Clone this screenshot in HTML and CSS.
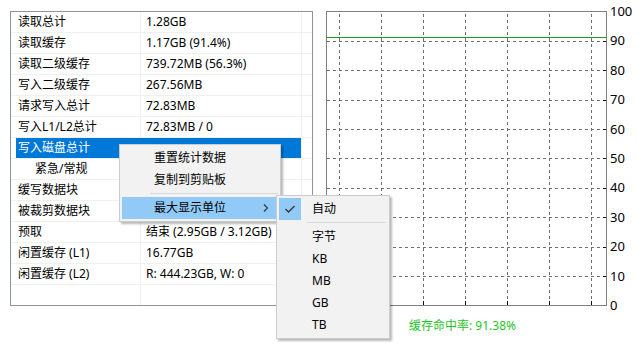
FILE: index.html
```html
<!DOCTYPE html>
<html>
<head>
<meta charset="utf-8">
<link rel="stylesheet" href="styles.css">
</head>
<body>
<div class="app">
  <div class="stats">
    <div class="row"><div class="k">读取总计</div><div class="v">1.28GB</div><div class="e"></div></div>
    <div class="row"><div class="k">读取缓存</div><div class="v">1.17GB (91.4%)</div><div class="e"></div></div>
    <div class="row"><div class="k">读取二级缓存</div><div class="v">739.72MB (56.3%)</div><div class="e"></div></div>
    <div class="row"><div class="k">写入二级缓存</div><div class="v">267.56MB</div><div class="e"></div></div>
    <div class="row"><div class="k">请求写入总计</div><div class="v">72.83MB</div><div class="e"></div></div>
    <div class="row"><div class="k">写入L1/L2总计</div><div class="v">72.83MB / 0</div><div class="e"></div></div>
    <div class="row sel"><div class="k">写入磁盘总计</div><div class="v"></div><div class="e"></div></div>
    <div class="row"><div class="k sub-k">紧急/常规</div><div class="v"></div><div class="e"></div></div>
    <div class="row"><div class="k">缓写数据块</div><div class="v"></div><div class="e"></div></div>
    <div class="row"><div class="k">被裁剪数据块</div><div class="v"></div><div class="e"></div></div>
    <div class="row"><div class="k">预取</div><div class="v">结束 (2.95GB / 3.12GB)</div><div class="e"></div></div>
    <div class="row"><div class="k">闲置缓存 (L1)</div><div class="v">16.77GB</div><div class="e"></div></div>
    <div class="row"><div class="k">闲置缓存 (L2)</div><div class="v">R: 444.23GB, W: 0</div><div class="e"></div></div>
    <div class="row"><div class="k"></div><div class="v"></div><div class="e"></div></div>
  </div>

  <div class="chart-area">
    <div class="chart-row">
      <svg class="chart" width="281" height="295" viewBox="0 0 281 295">
        <rect x="0" y="0" width="281" height="295" fill="#fff"/>
        <g stroke="#6e6e6e" stroke-width="1" stroke-dasharray="3 3" fill="none">
          <line x1="13.5" y1="3" x2="13.5" y2="294"/>
          <line x1="55.5" y1="3" x2="55.5" y2="294"/>
          <line x1="97.5" y1="3" x2="97.5" y2="294"/>
          <line x1="139.5" y1="3" x2="139.5" y2="294"/>
          <line x1="181.5" y1="3" x2="181.5" y2="294"/>
          <line x1="223.5" y1="3" x2="223.5" y2="294"/>
          <line x1="265.5" y1="3" x2="265.5" y2="294"/>
          <line x1="1" y1="30.5" x2="280" y2="30.5"/>
          <line x1="1" y1="59.5" x2="280" y2="59.5"/>
          <line x1="1" y1="89.5" x2="280" y2="89.5"/>
          <line x1="1" y1="118.5" x2="280" y2="118.5"/>
          <line x1="1" y1="147.5" x2="280" y2="147.5"/>
          <line x1="1" y1="177.5" x2="280" y2="177.5"/>
          <line x1="1" y1="206.5" x2="280" y2="206.5"/>
          <line x1="1" y1="236.5" x2="280" y2="236.5"/>
          <line x1="1" y1="265.5" x2="280" y2="265.5"/>
        </g>
        <g stroke="#111" stroke-width="1">
          <line x1="277" y1="30.5" x2="280" y2="30.5"/>
          <line x1="277" y1="59.5" x2="280" y2="59.5"/>
          <line x1="277" y1="89.5" x2="280" y2="89.5"/>
          <line x1="277" y1="118.5" x2="280" y2="118.5"/>
          <line x1="277" y1="147.5" x2="280" y2="147.5"/>
          <line x1="277" y1="177.5" x2="280" y2="177.5"/>
          <line x1="277" y1="206.5" x2="280" y2="206.5"/>
          <line x1="277" y1="236.5" x2="280" y2="236.5"/>
          <line x1="277" y1="265.5" x2="280" y2="265.5"/>
          <line x1="13.5" y1="290" x2="13.5" y2="294"/>
          <line x1="55.5" y1="290" x2="55.5" y2="294"/>
          <line x1="97.5" y1="290" x2="97.5" y2="294"/>
          <line x1="139.5" y1="290" x2="139.5" y2="294"/>
          <line x1="181.5" y1="290" x2="181.5" y2="294"/>
          <line x1="223.5" y1="290" x2="223.5" y2="294"/>
          <line x1="265.5" y1="290" x2="265.5" y2="294"/>
        </g>
        <line x1="1" y1="26.5" x2="280" y2="26.5" stroke="#1e9e1e" stroke-width="1"/>
        <rect x="0.5" y="0.5" width="280" height="294" fill="none" stroke="#808080"/>
      </svg>
      <div class="axis">
        <span>100</span><span>90</span><span>80</span><span>70</span><span>60</span><span>50</span><span>40</span><span>30</span><span>20</span><span>10</span><span>0</span>
      </div>
    </div>
    <div class="hit">缓存命中率: 91.38%</div>
  </div>
</div>

<div class="menu ctx">
  <div class="item">重置统计数据</div>
  <div class="item">复制到剪贴板</div>
  <div class="sep"></div>
  <div class="item hot">最大显示单位
    <svg class="arrow" width="8" height="10" viewBox="0 0 8 10"><path d="M2 1.5 L5.5 5 L2 8.5" fill="none" stroke="#333" stroke-width="1.1"/></svg>
  </div>
</div>

<div class="menu submenu">
  <div class="item checked">
    <span class="checkbox"><svg width="22" height="22" viewBox="0 0 22 22"><path d="M6.5 11 L9.5 14 L15.5 8" fill="none" stroke="#333" stroke-width="1.3"/></svg></span>
    自动
  </div>
  <div class="sep"></div>
  <div class="item">字节</div>
  <div class="item">KB</div>
  <div class="item">MB</div>
  <div class="item">GB</div>
  <div class="item">TB</div>
</div>
</body>
</html>
```

FILE: styles.css
```css
html, body {
  margin: 0;
  padding: 0;
  background: #fff;
}
body {
  width: 638px;
  height: 350px;
  overflow: hidden;
  font-family: "Noto Sans", "Noto Sans CJK SC", sans-serif;
  font-size: 12px;
  color: #000;
}
.app {
  display: flex;
  align-items: flex-start;
  padding: 11px 0 0 10px;
}
.stats {
  width: 301px;
  height: 293px;
  border: 1px solid #8f949b;
  background: #fff;
  overflow: hidden;
  flex: none;
}
.row {
  display: grid;
  grid-template-columns: 130px 161px 10px;
  height: 21px;
}
.row > div {
  box-sizing: border-box;
  border-right: 1px solid #f0f0f0;
  border-bottom: 1px solid #f0f0f0;
  line-height: 20px;
  white-space: nowrap;
  overflow: hidden;
}
.row .k {
  padding-left: 7px;
}
.row .k.sub-k {
  padding-left: 24px;
}
.row .v {
  padding-left: 5px;
}
.row .e {
  border-right: none;
}
.row.sel .k {
  background: linear-gradient(to right, #fff 5px, #0078d7 5px);
  border-right-color: #0078d7;
  color: #fff;
}
.row.sel .v {
  background: #0078d7;
}
.chart-area {
  margin-left: 13px;
  display: flex;
  flex-direction: column;
}
.chart-row {
  display: flex;
  align-items: flex-start;
}
.chart {
  display: block;
  flex: none;
}
.axis {
  margin-left: 3px;
  margin-top: -8px;
  height: 310px;
  display: flex;
  flex-direction: column;
  justify-content: space-between;
  font-size: 13px;
}
.axis span {
  display: block;
  height: 16px;
  line-height: 16px;
}
.hit {
  margin-left: 83px;
  margin-top: 5px;
  color: #1fc41f;
  line-height: 16px;
}
.menu {
  position: absolute;
  background: #f2f2f2;
  border: 1px solid #cccccc;
  padding: 2px;
  box-shadow: 2px 2px 2px rgba(0, 0, 0, 0.28);
}
.menu .item {
  position: relative;
  height: 22px;
  line-height: 22px;
  white-space: nowrap;
}
.menu .sep {
  height: 6px;
  position: relative;
}
.menu .sep::after {
  content: "";
  position: absolute;
  top: 2px;
  height: 1px;
  background: #d7d7d7;
}
.ctx {
  left: 119px;
  top: 144px;
  width: 156px;
}
.ctx .item {
  padding-left: 32px;
}
.ctx .sep::after {
  left: 28px;
  right: 0;
}
.ctx .item.hot {
  background: #91c9f7;
}
.ctx .arrow {
  position: absolute;
  right: 8px;
  top: 6px;
}
.submenu {
  left: 276px;
  top: 195px;
  width: 108px;
}
.submenu .item {
  padding-left: 33px;
}
.submenu .sep::after {
  left: 28px;
  right: 2px;
}
.submenu .checkbox {
  position: absolute;
  left: 0;
  top: 0;
  width: 22px;
  height: 22px;
  background: #91c9f7;
}
.submenu .checkbox svg {
  display: block;
}
```
